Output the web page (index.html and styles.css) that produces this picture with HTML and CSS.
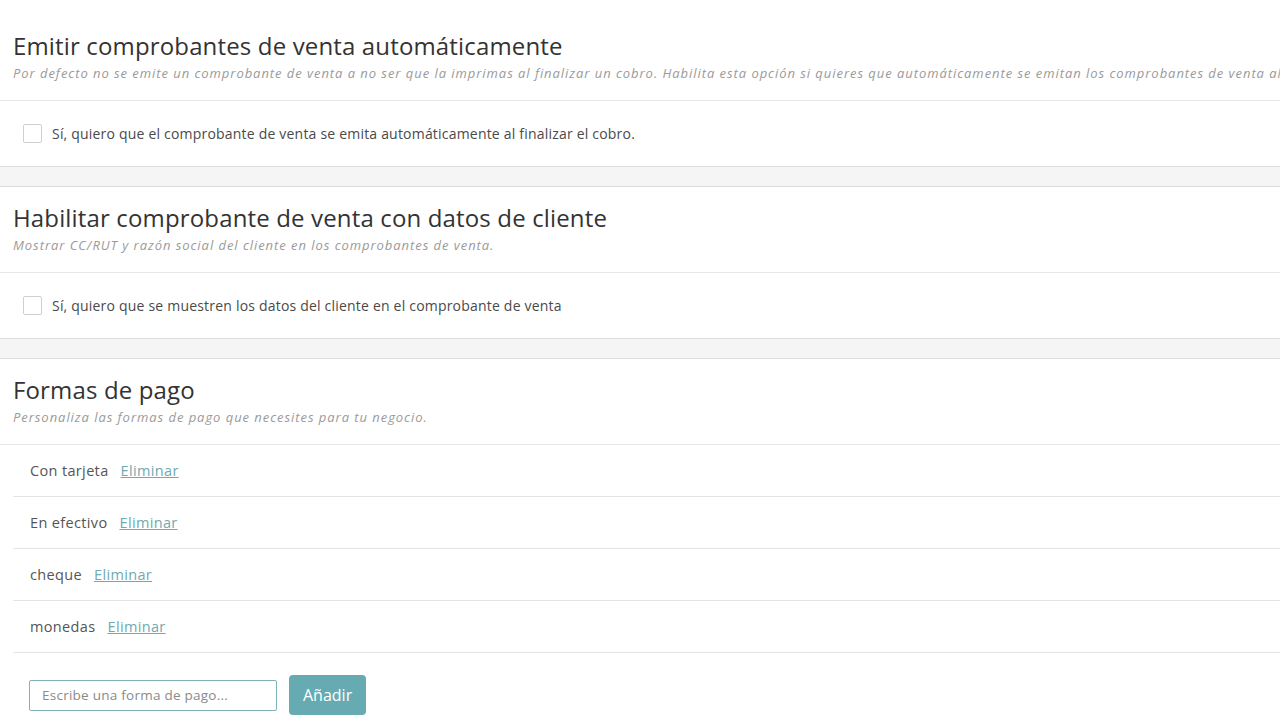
FILE: index.html
```html
<!DOCTYPE html>
<html lang="es">
<head>
<meta charset="utf-8">
<title>Configuración</title>
<link rel="stylesheet" href="styles.css">
</head>
<body>
<main class="page">
  <section class="card">
    <header class="card-head">
      <h2 class="card-title">Emitir comprobantes de venta automáticamente</h2>
      <p class="card-sub">Por defecto no se emite un comprobante de venta a no ser que la imprimas al finalizar un cobro. Habilita esta opción si quieres que automáticamente se emitan los comprobantes de venta al finalizar cada cobro.</p>
    </header>
    <div class="card-body">
      <label class="check"><span class="box"></span><span>Sí, quiero que el comprobante de venta se emita automáticamente al finalizar el cobro.</span></label>
    </div>
  </section>
  <div class="band"></div>
  <section class="card">
    <header class="card-head">
      <h2 class="card-title">Habilitar comprobante de venta con datos de cliente</h2>
      <p class="card-sub">Mostrar CC/RUT y razón social del cliente en los comprobantes de venta.</p>
    </header>
    <div class="card-body">
      <label class="check"><span class="box"></span><span>Sí, quiero que se muestren los datos del cliente en el comprobante de venta</span></label>
    </div>
  </section>
  <div class="band"></div>
  <section class="card card-last">
    <header class="card-head">
      <h2 class="card-title">Formas de pago</h2>
      <p class="card-sub">Personaliza las formas de pago que necesites para tu negocio.</p>
    </header>
    <ul class="pay-list">
      <li class="pay-item"><span>Con tarjeta</span><a class="pay-del" href="#">Eliminar</a></li>
      <li class="pay-item"><span>En efectivo</span><a class="pay-del" href="#">Eliminar</a></li>
      <li class="pay-item"><span>cheque</span><a class="pay-del" href="#">Eliminar</a></li>
      <li class="pay-item"><span>monedas</span><a class="pay-del" href="#">Eliminar</a></li>
    </ul>
    <form class="pay-form">
      <input class="pay-input" type="text" placeholder="Escribe una forma de pago...">
      <button class="pay-btn" type="button">Añadir</button>
    </form>
  </section>
</main>
</body>
</html>
```
FILE: styles.css
```css
* { box-sizing: border-box; }
html, body { margin: 0; padding: 0; background: #fff; }
body {
  font-family: "Open Sans", "Liberation Sans", sans-serif;
  color: #444;
  overflow: hidden;
}
.page { padding-top: 15px; }
.card { background: #fff; border-bottom: 1px solid #dcdcdc; }
.card-last { border-bottom: none; }
.card-head {
  padding: 18px 0 19px 13px;
  border-bottom: 1px solid #e6e6e6;
}
.card-title {
  margin: 0;
  font-size: 24px;
  line-height: 26px;
  font-weight: 400;
  letter-spacing: 0.15px;
  color: #333;
  white-space: nowrap;
}
.card-sub {
  margin: 6px 0 0;
  font-size: 13px;
  line-height: 16px;
  font-style: italic;
  letter-spacing: 0.95px;
  color: #9a9a9a;
  white-space: nowrap;
  overflow: hidden;
}
.card-body { padding: 23px 0 23px 23px; }
.check {
  display: flex;
  align-items: center;
  gap: 10px;
  font-size: 14px;
  letter-spacing: 0.2px;
  color: #4a4a4a;
}
.box {
  flex: none;
  width: 19px;
  height: 19px;
  border: 1px solid #cfcfcf;
  border-radius: 2px;
  background: #fff;
}
.band {
  height: 20px;
  background: #f5f5f5;
  border-bottom: 1px solid #dcdcdc;
}
.pay-list { list-style: none; margin: 0 0 0 13px; padding: 0; }
.pay-item {
  height: 52px;
  display: flex;
  align-items: center;
  gap: 12px;
  padding-left: 17px;
  border-bottom: 1px solid #e3e3e3;
  font-size: 14.5px;
  letter-spacing: 0.35px;
  color: #555;
}
.pay-del { color: #6fa9b1; text-decoration: underline; }
.pay-form {
  display: flex;
  align-items: center;
  gap: 12px;
  padding: 22px 0 0 29px;
}
.pay-input {
  width: 248px;
  height: 31px;
  border: 1px solid #7fb2b8;
  border-radius: 2px;
  padding: 0 12px;
  font-family: inherit;
  font-size: 13.5px;
  letter-spacing: 0.25px;
  color: #555;
}
.pay-input::placeholder { color: #8a8a8a; }
.pay-btn {
  height: 40px;
  padding: 0 14px;
  border: none;
  border-radius: 4px;
  background: #66abb1;
  color: #fff;
  font-family: inherit;
  font-size: 16px;
}
```
